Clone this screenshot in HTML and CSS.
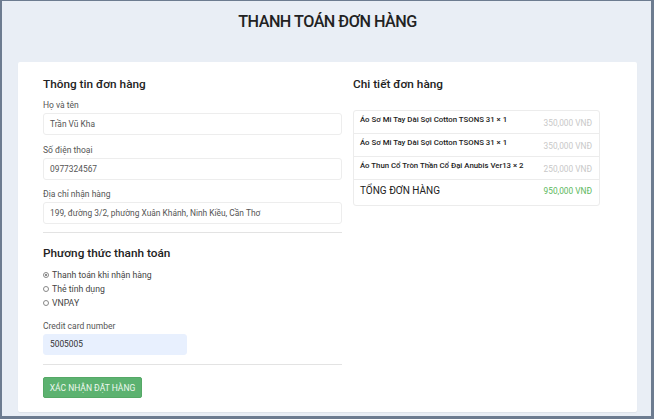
FILE: index.html
```html
<!DOCTYPE html>
<html lang="vi">
<head>
<meta charset="utf-8">
<link rel="stylesheet" href="styles.css">
</head>
<body>
<div class="frame">
  <h1 class="title">THANH TOÁN ĐƠN HÀNG</h1>
  <div class="card">
    <div class="col-left">
      <h2 class="heading">Thông tin đơn hàng</h2>
      <div class="field f1">
        <label class="label">Họ và tên</label>
        <div class="input">Trần Vũ Kha</div>
      </div>
      <div class="field f2">
        <label class="label">Số điện thoại</label>
        <div class="input">0977324567</div>
      </div>
      <div class="field f3">
        <label class="label">Địa chỉ nhận hàng</label>
        <div class="input">199, đường 3/2, phường Xuân Khánh, Ninh Kiều, Cần Thơ</div>
      </div>
      <hr class="rule rule-1">
      <h2 class="heading heading-2">Phương thức thanh toán</h2>
      <div class="radios">
        <div class="radio"><span class="dot checked"></span>Thanh toán khi nhận hàng</div>
        <div class="radio"><span class="dot"></span>Thẻ tính dụng</div>
        <div class="radio"><span class="dot"></span>VNPAY</div>
      </div>
      <div class="field field-cc">
        <label class="label">Credit card number</label>
        <div class="input input-cc">5005005</div>
      </div>
      <hr class="rule rule-2">
      <button class="btn">XÁC NHẬN ĐẶT HÀNG</button>
    </div>
    <div class="col-right">
      <h2 class="heading">Chi tiết đơn hàng</h2>
      <ul class="list">
        <li class="row"><span class="item">Áo Sơ Mi Tay Dài Sợi Cotton TSONS 31 × 1</span><span class="price">350,000 VNĐ</span></li>
        <li class="row"><span class="item">Áo Sơ Mi Tay Dài Sợi Cotton TSONS 31 × 1</span><span class="price">350,000 VNĐ</span></li>
        <li class="row"><span class="item">Áo Thun Cổ Tròn Thần Cổ Đại Anubis Ver13 × 2</span><span class="price">250,000 VNĐ</span></li>
        <li class="row total"><span class="total-label">TỔNG ĐƠN HÀNG</span><span class="total-price">950,000 VNĐ</span></li>
      </ul>
    </div>
  </div>
</div>
</body>
</html>
```
FILE: styles.css
```css
* { box-sizing: border-box; }
html, body { margin: 0; padding: 0; }
body {
  font-family: Roboto, "Liberation Sans", Arial, sans-serif;
  color: #222;
  background: #e9eef5;
}
.frame {
  width: 654px;
  height: 419px;
  background: #e9eef5;
  border-style: solid;
  border-color: #6d7c90;
  border-width: 1px 3px 3px 2px;
  padding: 0 14px 0 16px;
  overflow: hidden;
}
.title {
  margin: 0;
  padding-top: 10px;
  height: 61px;
  text-align: center;
  font-size: 16.2px;
  font-weight: 500;
  letter-spacing: -0.5px;
  color: #222;
  line-height: 22px;
}
.card {
  background: #fff;
  height: 350px;
  display: grid;
  grid-template-columns: 299px 247px;
  grid-template-rows: min-content;
  column-gap: 11px;
  padding: 14px 0 0 25px;
  box-shadow: 0 1px 1px rgba(0,0,0,0.05);
  border-radius: 2px;
}
.heading {
  margin: 0;
  font-size: 11.8px;
  font-weight: 500;
  line-height: 16px;
  color: #222;
}
.f1 { margin-top: 8px; }
.f2 { margin-top: 10px; }
.f3 { margin-top: 9px; }
.label {
  display: block;
  font-size: 8.5px;
  line-height: 11px;
  color: #555;
  margin-bottom: 2px;
}
.input {
  height: 22px;
  border: 1px solid #ededed;
  border-radius: 3px;
  font-size: 8.4px;
  line-height: 20px;
  padding-left: 6px;
  color: #555;
}
.rule {
  border: 0;
  border-top: 1px solid #e3e3e3;
  margin: 8px 0 0 0;
}
.heading-2 { margin-top: 12px; }
.radios { margin-top: 7px; }
.radio {
  display: flex;
  align-items: center;
  font-size: 8.7px;
  line-height: 14px;
  color: #444;
}
.dot {
  width: 6px;
  height: 6px;
  border: 1px solid #888;
  border-radius: 50%;
  margin-right: 3px;
  display: inline-block;
  position: relative;
  flex: none;
}
.dot.checked::after {
  content: "";
  position: absolute;
  left: 1px; top: 1px;
  width: 2px; height: 2px;
  border-radius: 50%;
  background: #666;
}
.field-cc { margin-top: 11px; }
.input-cc {
  width: 144px;
  height: 21px;
  background: #e8f0fe;
  border-color: #e8f0fe;
  color: #333;
  line-height: 19px;
}
.rule-2 { margin-top: 9px; }
.btn {
  margin-top: 12px;
  width: 99px;
  height: 21px;
  background: #5cb270;
  border: 1px solid #55a866;
  border-radius: 2px;
  color: #eef8ef;
  font-family: Roboto, "Liberation Sans", Arial, sans-serif;
  font-size: 8.5px;
  padding: 0;
  display: block;
}
.list {
  list-style: none;
  margin: 18px 0 0 0;
  padding: 0;
  border: 1px solid #ececec;
  border-radius: 3px;
}
.row {
  display: flex;
  justify-content: space-between;
  align-items: flex-start;
  height: 23px;
  padding: 4px 7px 0 6px;
  border-top: 1px solid #ececec;
}
.row:first-child { border-top: 0; height: 22px; }
.item {
  font-size: 7.8px;
  font-weight: 500;
  color: #222;
  line-height: 10px;
}
.price {
  font-size: 8.3px;
  color: #c8c8c8;
  line-height: 11px;
  margin-top: 3px;
}
.row.total { height: 26px; padding-top: 5px; }
.total-label {
  font-size: 10px;
  color: #222;
  line-height: 12px;
}
.total-price {
  font-size: 8.3px;
  color: #5cb85c;
  line-height: 12px;
}
```
